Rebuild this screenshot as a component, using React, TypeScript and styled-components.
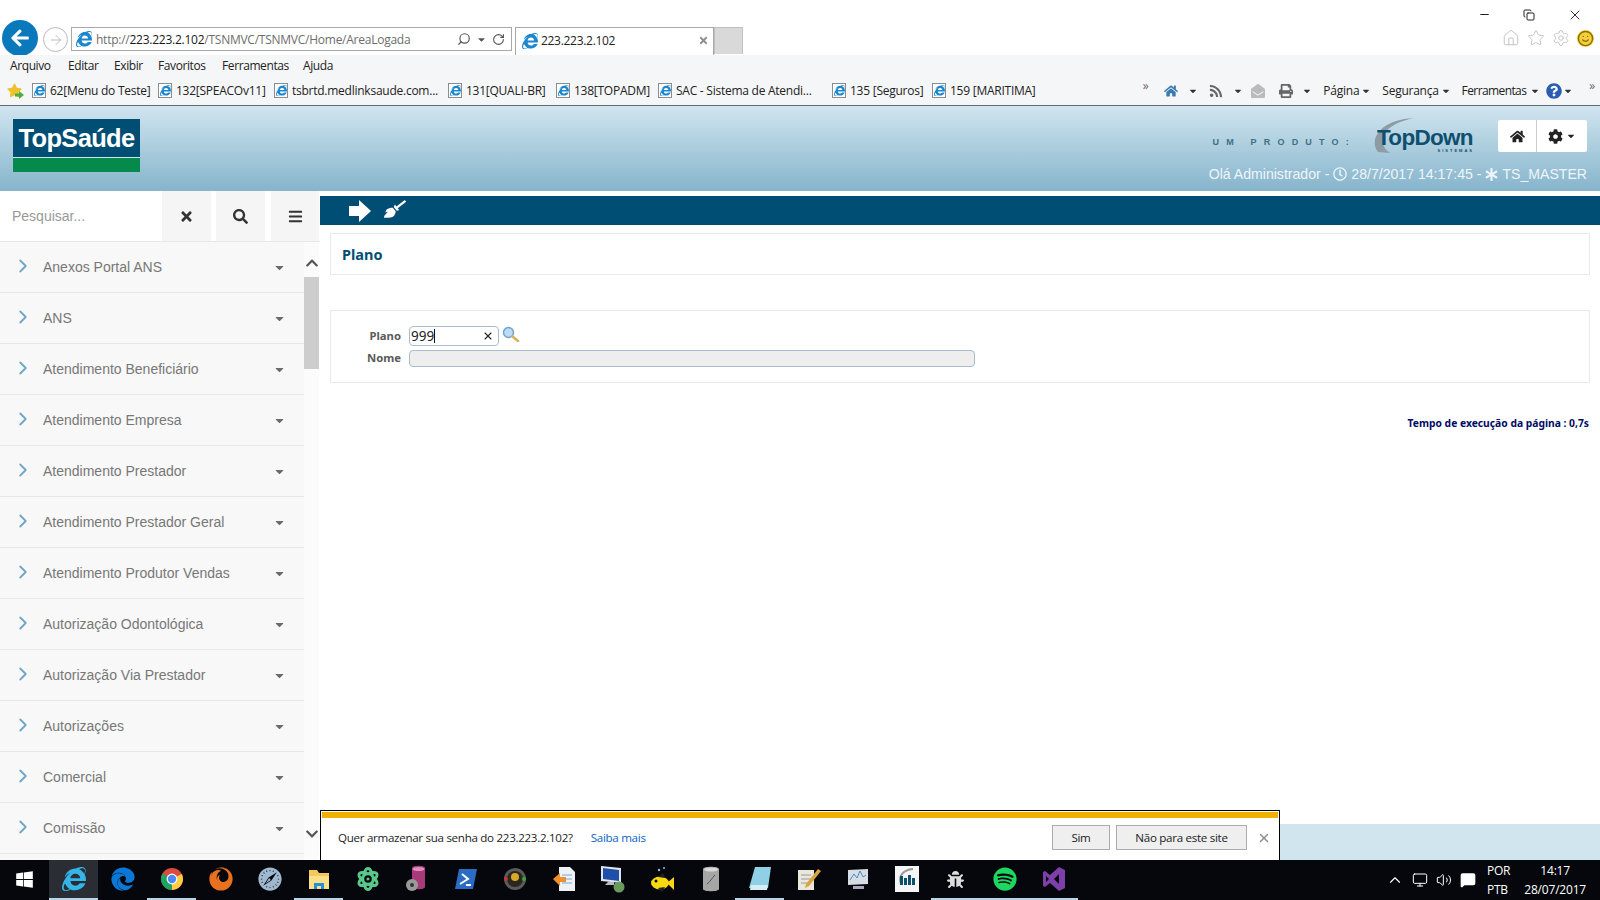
import React from 'react'
import styled, { createGlobalStyle } from 'styled-components'
import {
  FaTimes, FaSearch, FaBars, FaHome, FaCog, FaCaretDown, FaBroom, FaRegClock, FaAsterisk,
  FaInternetExplorer, FaEdge, FaFirefox, FaSafari, FaSpotify, FaWindows, FaAtom, FaChevronUp, FaChevronDown,
  FaStar, FaQuestionCircle, FaRss, FaPrint, FaEnvelopeOpen, FaArrowLeft, FaBug
} from 'react-icons/fa'
import {
  Minus, Copy, X, Home, Star, Settings, Smile, ChevronRight, ChevronUp, Volume2, Monitor, MessageSquare,
  ArrowRight, Search, RotateCw
} from 'lucide-react'

const GlobalStyle = createGlobalStyle`
  html, body { margin: 0; padding: 0; height: 100%; overflow: hidden; background: #fff; }
  * { box-sizing: border-box; }
`

const SEGOE = `"Open Sans", "Noto Sans", sans-serif`
const ARIAL = `"Liberation Sans", Arial, sans-serif`

const Page = styled.div`
  width: 1600px;
  height: 900px;
  display: flex;
  flex-direction: column;
  overflow: hidden;
  font-family: ${ARIAL};
`

/* ---- browser chrome ---- */
const TitleRow = styled.div`
  height: 55px;
  display: flex;
  justify-content: space-between;
  background: #fff;
  overflow: hidden;
`
const NavGroup = styled.div`
  display: flex;
  align-items: flex-start;
`
const BackButton = styled.div`
  width: 36px;
  height: 36px;
  margin: 20px 0 0 2px;
  border-radius: 50%;
  background: #0a79bb;
  color: #fff;
  display: flex;
  align-items: center;
  justify-content: center;
  font-size: 20px;
`
const ForwardButton = styled.div`
  width: 25px;
  height: 25px;
  margin: 27px 0 0 5px;
  border: 1px solid #bbb;
  border-radius: 50%;
  color: #bdbdbd;
  display: flex;
  align-items: center;
  justify-content: center;
`
const AddressBar = styled.div`
  width: 441px;
  height: 24px;
  margin: 27px 0 0 3px;
  border: 1px solid #a8a8a8;
  display: flex;
  align-items: center;
  padding: 0 6px 0 4px;
  font: 12px ${SEGOE};
  letter-spacing: -0.25px;
  color: #6d6d6d;
`
const UrlHost = styled.span`
  color: #1a1a1a;
`
const Url = styled.div`
  margin-left: 4px;
  flex: 1;
  white-space: nowrap;
`
const AddressTools = styled.div`
  display: flex;
  align-items: center;
  gap: 5px;
  color: #555;
  font-size: 11px;
`
const MirrorIcon = styled.span`
  display: flex;
  transform: scaleX(-1);
`
const Tab = styled.div`
  width: 199px;
  height: 28px;
  margin: 27px 0 0 3px;
  border: 1px solid #a8a8a8;
  border-bottom: 0;
  display: flex;
  align-items: center;
  padding: 0 4px 2px 6px;
  font: 12px ${SEGOE};
  letter-spacing: -0.3px;
  color: #222;
`
const TabTitle = styled.span`
  margin-left: 3px;
  flex: 1;
`
const TabClose = styled.span`
  color: #8f8f8f;
  font-size: 11px;
  display: flex;
`
const NewTab = styled.div`
  width: 29px;
  height: 27px;
  margin-top: 27px;
  background: #d9d9d9;
  border: 1px solid #c0c0c0;
  border-bottom: 0;
`
const RightTools = styled.div`
  display: flex;
  flex-direction: column;
  align-items: flex-end;
  padding-right: 6px;
`
const WindowControls = styled.div`
  display: flex;
  gap: 32px;
  height: 29px;
  align-items: center;
  padding-right: 11px;
  color: #222;
`
const FrameTools = styled.div`
  display: flex;
  gap: 7px;
  align-items: center;
  color: #c2c2c2;
`
const Smiley = styled.span`
  display: flex;
  color: #8a7000;
  background: #f5cf3d;
  border-radius: 50%;
`
const MenuRow = styled.div`
  height: 23px;
  background: #f5f6f7;
  display: flex;
  align-items: center;
  padding: 0 0 2px 10px;
  font: 12px ${SEGOE};
  letter-spacing: -0.4px;
  color: #222;
`
const MenuItem = styled.span<{ $w: number }>`
  width: ${p => p.$w}px;
`
const FavRow = styled.div`
  height: 28px;
  background: #f5f6f7;
  border-bottom: 1px solid #5f6b70;
  display: flex;
  align-items: center;
  justify-content: space-between;
  padding: 0 5px 2px 7px;
  font: 12px ${SEGOE};
  letter-spacing: -0.25px;
  color: #222;
`
const FavList = styled.div`
  display: flex;
  align-items: center;
`
const FavStar = styled.span`
  position: relative;
  display: flex;
  color: #eec12d;
  font-size: 15px;
  margin-right: 10px;
`
const FavArrow = styled.svg`
  position: absolute;
  right: -2px;
  bottom: -1px;
`
const FavItem = styled.span<{ $w: number }>`
  width: ${p => p.$w}px;
  display: flex;
  align-items: center;
  gap: 4px;
  white-space: nowrap;
  overflow: hidden;
`
const CommandBar = styled.div`
  display: flex;
  align-items: center;
`
const CmdIcon = styled.span<{ $c: string; $ml: number }>`
  display: flex;
  color: ${p => p.$c};
  font-size: 14px;
  margin-left: ${p => p.$ml}px;
`
const CmdCaret = styled.span<{ $ml: number }>`
  display: flex;
  font-size: 10px;
  color: #333;
  margin-left: ${p => p.$ml}px;
`
const CmdLabel = styled.span<{ $ml: number; $tight?: boolean }>`
  margin-left: ${p => p.$ml}px;
  letter-spacing: ${p => (p.$tight ? '-0.6px' : '-0.25px')};
`
const Chevrons = styled.span<{ $ml?: number }>`
  color: #666;
  font-size: 12px;
  position: relative;
  top: -5px;
  margin-left: ${p => p.$ml || 0}px;
`
const PageIconBox = styled.span`
  position: relative;
  width: 14px;
  height: 15px;
  flex: none;
  background: #fff;
  border: 1px solid #8c8c8c;
  display: flex;
  align-items: center;
  justify-content: center;
  color: #1c86cf;
  font-size: 11px;
`

/* ---- app header ---- */
const Header = styled.header`
  height: 85px;
  background: linear-gradient(#d0e5ef, #86b4cc);
  display: flex;
  justify-content: space-between;
  padding: 13px 13px 0 13px;
`
const Logo = styled.div`
  width: 127px;
  height: 53px;
  background: #004e73;
  display: flex;
  flex-direction: column;
`
const LogoName = styled.div`
  height: 38px;
  color: #fff;
  font: bold 25.5px/38px ${ARIAL};
  letter-spacing: -0.7px;
  text-align: center;
`
const LogoBand = styled.div`
  height: 15px;
  background: #068a4b;
  border-top: 1px solid #d0e5ef;
`
const HeaderRight = styled.div`
  display: flex;
  flex-direction: column;
  align-items: flex-end;
`
const BrandRow = styled.div`
  display: flex;
  align-items: flex-start;
  margin-top: 1px;
`
const BrandCaption = styled.span`
  font: bold 9px ${ARIAL};
  letter-spacing: 7.2px;
  color: #3f7186;
  margin-right: 14px;
  margin-top: 17px;
`
const TopDownMark = styled.div`
  position: relative;
  width: 106px;
  height: 34px;
  margin-right: 22px;
`
const Swoosh = styled.svg`
  position: absolute;
  left: 0;
  top: -3px;
`
const TopDownName = styled.span`
  position: absolute;
  left: 7px;
  top: 6px;
  font: bold 22.5px/24px ${ARIAL};
  letter-spacing: -0.7px;
  color: #0f4f6e;
`
const TopDownSub = styled.span`
  position: absolute;
  right: 2px;
  top: 28px;
  font: bold 4px/5px ${ARIAL};
  letter-spacing: 2px;
  color: #0f4f6e;
`
const BtnGroup = styled.div`
  display: flex;
  height: 32px;
  background: #fff;
  border-radius: 2px;
  color: #222;
`
const HeaderBtn = styled.div<{ $w: number; $line?: boolean }>`
  width: ${p => p.$w}px;
  display: flex;
  align-items: center;
  justify-content: center;
  font-size: 15px;
  gap: 3px;
  border-right: ${p => (p.$line ? '1px solid #ccc' : '0')};
`
const SmallCaret = styled.span`
  display: flex;
  font-size: 10px;
`
const Greeting = styled.div`
  display: flex;
  align-items: center;
  gap: 4px;
  margin-top: 12px;
  font: 14.1px ${ARIAL};
  color: #eef5f8;
  white-space: nowrap;
`

/* ---- body ---- */
const Body = styled.div`
  height: 669px;
  display: flex;
  position: relative;
`
const Sidebar = styled.aside`
  width: 320px;
  flex: none;
  display: flex;
  flex-direction: column;
`
const SearchRow = styled.div`
  height: 51px;
  flex: none;
  display: flex;
  border-bottom: 1px solid #e7e7e7;
`
const SearchInput = styled.div`
  width: 162px;
  padding-left: 12px;
  font: 14px/51px ${ARIAL};
  color: #999;
`
const SearchBtn = styled.div<{ $ml: number; $w: number }>`
  width: ${p => p.$w}px;
  margin-left: ${p => p.$ml}px;
  background: #f5f5f5;
  display: flex;
  align-items: center;
  justify-content: center;
  color: #333;
  font-size: 15px;
`
const SideBody = styled.div`
  flex: 1;
  min-height: 0;
  display: flex;
`
const MenuList = styled.ul`
  list-style: none;
  margin: 0;
  padding: 0;
  width: 304px;
  overflow: hidden;
  background: #f8f8f8;
`
const MenuEntry = styled.li`
  height: 51px;
  border-bottom: 1px solid #e7e7e7;
  display: flex;
  align-items: center;
  padding: 0 18px 1px 12px;
  font: 14px ${ARIAL};
  color: #777;
`
const EntryChevron = styled.span`
  display: flex;
  color: #6fa6c4;
  margin: -2px 9px 0 0;
`
const EntryLabel = styled.span`
  flex: 1;
`
const EntryCaret = styled.span`
  display: flex;
  color: #6b6b6b;
  font-size: 13px;
  margin-top: 2px;
`
const ScrollBar = styled.div`
  width: 15px;
  display: flex;
  flex-direction: column;
  align-items: center;
  background: #fbfbfb;
  color: #555;
  font-size: 14px;
`
const ScrollArrow = styled.div<{ $h: number; $pt?: number }>`
  height: ${p => p.$h}px;
  padding-top: ${p => p.$pt || 0}px;
  display: flex;
  align-items: center;
  justify-content: center;
`
const ScrollThumb = styled.div`
  width: 100%;
  height: 92px;
  background: #cdcdcd;
`
const ScrollGap = styled.div`
  flex: 1;
`
const Main = styled.main`
  flex: 1;
  display: flex;
  flex-direction: column;
  padding-top: 5px;
`
const ActionBar = styled.div`
  height: 29px;
  background: #004e73;
  color: #fff;
  display: flex;
  align-items: center;
  gap: 12px;
  padding-left: 28px;
`
const ActionIcon = styled.span<{ $s: number; $mt?: number }>`
  display: flex;
  font-size: ${p => p.$s}px;
  margin-top: ${p => p.$mt || 0}px;
`
const Card = styled.section`
  margin: 8px 10px 0 10px;
  width: 1260px;
  height: 42px;
  border: 1px solid #e9e9e9;
  padding-left: 11px;
  display: flex;
  align-items: center;
`
const Title = styled.h1`
  margin: 0;
  font: bold 14.5px "Noto Sans", sans-serif;
  color: #004e73;
`
const FormCard = styled.section`
  margin: 35px 10px 0 10px;
  width: 1260px;
  height: 73px;
  border: 1px solid #e9e9e9;
  padding-top: 15px;
  display: flex;
  flex-direction: column;
  gap: 4px;
`
const FormRow = styled.div<{ $h: number }>`
  height: ${p => p.$h}px;
  display: flex;
  align-items: center;
`
const FieldLabel = styled.label`
  width: 70px;
  margin-right: 8px;
  padding-bottom: 2px;
  text-align: right;
  font: bold 11.3px "Noto Sans", sans-serif;
  color: #5a5a5a;
`
const CodeInput = styled.div`
  width: 90px;
  height: 20px;
  border: 1px solid #a9bccd;
  border-radius: 4px;
  display: flex;
  align-items: center;
  justify-content: space-between;
  padding: 0 4px 0 1px;
  font: 13.5px "Noto Sans", sans-serif;
  color: #222;
`
const Caret = styled.span`
  display: inline-block;
  width: 1px;
  height: 14px;
  background: #111;
  vertical-align: -2px;
`
const ClearX = styled.span`
  display: flex;
  color: #222;
`
const Lookup = styled.span`
  display: flex;
  margin: -5px 0 0 3px;
`
const NameInput = styled.div`
  width: 566px;
  height: 17px;
  border: 1px solid #a9bccd;
  border-radius: 4px;
  background: #eeeeee;
`
const ExecTime = styled.div`
  margin: 33px 11px 0 0;
  text-align: right;
  font: bold 10.3px "Noto Sans", sans-serif;
  color: #000b66;
`
const FooterBand = styled.div`
  margin-top: auto;
  height: 36px;
  background: #d0e5ed;
`
const SavePrompt = styled.div`
  position: absolute;
  left: 320px;
  bottom: 0;
  width: 960px;
  height: 50px;
  background: #fff;
  border: 1px solid #000;
  border-bottom: 0;
  padding-top: 1px;
  font: 11.6px ${SEGOE};
  letter-spacing: -0.3px;
  color: #222;
`
const PromptBar = styled.div`
  height: 6px;
  margin: 0 1px;
  background: #f0b000;
`
const PromptBody = styled.div`
  height: 41px;
  display: flex;
  align-items: center;
  padding: 0 0 2px 17px;
`
const PromptLink = styled.a`
  margin-left: 18px;
  color: #0a63c4;
  flex: 1;
`
const PromptButton = styled.button<{ $w: number }>`
  width: ${p => p.$w}px;
  height: 25px;
  margin-right: 6px;
  padding: 0;
  background: #efefef;
  border: 1px solid #acacac;
  font: inherit;
  letter-spacing: inherit;
  color: inherit;
`
const PromptClose = styled.span`
  display: flex;
  margin: 0 8px 0 4px;
  color: #8a8a8a;
`

/* ---- taskbar ---- */
const Taskbar = styled.footer`
  height: 40px;
  background: #05070c;
  display: flex;
  align-items: stretch;
  color: #fff;
  font: 12px ${SEGOE};
  letter-spacing: -0.2px;
`
const TaskSlot = styled.div<{ $active?: boolean; $open?: boolean; $c?: string; $s?: number }>`
  width: 49px;
  display: flex;
  align-items: center;
  justify-content: center;
  position: relative;
  font-size: ${p => p.$s || 24}px;
  color: ${p => p.$c || '#fff'};
  background: ${p => (p.$active ? '#2a2d33' : 'transparent')};
  border-bottom: 2px solid ${p => (p.$open || p.$active ? '#b6d6ea' : 'transparent')};
`
const Tray = styled.div`
  margin-left: auto;
  display: flex;
  align-items: center;
  padding-right: 14px;
  gap: 8px;
`
const TrayStack = styled.div<{ $center?: boolean; $ml?: number }>`
  display: flex;
  flex-direction: column;
  gap: 2px;
  line-height: 17px;
  text-align: ${p => (p.$center ? 'center' : 'left')};
  margin-left: ${p => p.$ml || 0}px;
`

const IePage = () => (
  <PageIconBox>
    <FaInternetExplorer />
  </PageIconBox>
)

const ChromeIcon = () => (
  <svg width="24" height="24" viewBox="0 0 24 24">
    <circle cx="12" cy="12" r="11" fill="#dd4b3e" />
    <path d="M12 12 L2.5 6.5 A11 11 0 0 0 12 23 Z" fill="#1da462" />
    <path d="M12 12 L21.8 7 A11 11 0 0 1 12 23 Z" fill="#ffcd40" />
    <circle cx="12" cy="12" r="5.4" fill="#fff" />
    <circle cx="12" cy="12" r="4.2" fill="#4c8bf5" />
  </svg>
)
const FolderIcon = () => (
  <svg width="24" height="24" viewBox="0 0 24 24">
    <path d="M2 3h8l2 3h10v16H2z" fill="#f4c95b" />
    <path d="M2 9h20v13H2z" fill="#fbe08a" />
    <path d="M7 16h10v6H7z" fill="#2a8fd6" />
    <path d="M10 19h4v3h-4z" fill="#fbe08a" />
  </svg>
)
const DbIcon = () => (
  <svg width="24" height="28" viewBox="0 0 24 28">
    <path d="M7 3c0-3 13-3 13 0v19c0 3-13 3-13 0z" fill="#a83a7a" />
    <ellipse cx="13.5" cy="4" rx="6" ry="2" fill="#dd8fc0" />
    <circle cx="7" cy="20" r="6" fill="#9a9a9a" />
    <circle cx="7" cy="20" r="2" fill="#333" />
  </svg>
)
const PsIcon = () => (
  <svg width="24" height="24" viewBox="0 0 24 24">
    <path d="M5 2h18l-4 20H1z" fill="#2a6cc4" />
    <path d="M8 7l6 5-8 5" fill="none" stroke="#fff" strokeWidth="2" />
    <path d="M12 18h5" stroke="#fff" strokeWidth="2" />
  </svg>
)
const DiscIcon = () => (
  <svg width="24" height="24" viewBox="0 0 24 24">
    <circle cx="12" cy="12" r="11" fill="#5b5b5b" />
    <circle cx="12" cy="12" r="8" fill="#2a2620" />
    <circle cx="12" cy="10" r="4" fill="#d6a928" />
    <circle cx="3" cy="12" r="2" fill="#c33" />
    <circle cx="21" cy="12" r="2" fill="#3a3" />
  </svg>
)
const DocArrowIcon = () => (
  <svg width="24" height="26" viewBox="0 0 24 26">
    <path d="M7 1h11l5 5v19H7z" fill="#eef1f5" />
    <path d="M10 9h10M10 13h10M10 17h10" stroke="#7ba7d1" />
    <path d="M1 13l7-6v4h6v5H8v4z" fill="#ef8d2f" />
  </svg>
)
const PcIcon = () => (
  <svg width="26" height="28" viewBox="0 0 26 28">
    <path d="M1 1l20 2v15L1 16z" fill="#dfe6ee" />
    <path d="M3 3l16 2v11L3 14z" fill="#214fa8" />
    <path d="M8 17h6v3H5z" fill="#b9bec4" />
    <circle cx="19" cy="22" r="5.5" fill="#6a9a5c" />
  </svg>
)
const FishIcon = () => (
  <svg width="26" height="28" viewBox="0 0 26 28">
    <ellipse cx="11" cy="18" rx="9" ry="6.5" fill="#f7d90f" />
    <path d="M18 18l7-6v13z" fill="#f7d90f" />
    <circle cx="7" cy="16" r="1.5" fill="#111" />
    <path d="M9 23l4 4 3-5zM9 12l5-4 2 5z" fill="#222" />
    <circle cx="10" cy="5" r="1.2" fill="#9bd" />
    <circle cx="15" cy="3" r="1" fill="#9bd" />
  </svg>
)
const DiskIcon = () => (
  <svg width="20" height="26" viewBox="0 0 20 26">
    <path d="M2 3c0-3 16-3 16 0v20c0 3-16 3-16 0z" fill="#a6a6a6" />
    <ellipse cx="10" cy="3.5" rx="7" ry="2" fill="#d8d8d8" />
    <path d="M6 18c3-2 5-6 8-9" stroke="#555" fill="none" />
  </svg>
)
const NoteIcon = () => (
  <svg width="24" height="26" viewBox="0 0 24 26">
    <path d="M7 1h16l-3 21H1z" fill="#8fd0e6" />
    <path d="M3 19h17l-1 5H2z" fill="#d4eef6" />
  </svg>
)
const NotepadIcon = () => (
  <svg width="26" height="26" viewBox="0 0 26 26">
    <path d="M2 4h16v20H2z" fill="#eae7dc" />
    <path d="M5 9h10M5 13h10M5 17h10" stroke="#999" />
    <path d="M10 18L22 3l3 2-12 15-4 2z" fill="#d9a441" />
  </svg>
)
const MonitorIcon = () => (
  <svg width="26" height="26" viewBox="0 0 26 26">
    <path d="M3 4l20-1v15l-20 1z" fill="#d6dde3" />
    <path d="M5 14l4-6 3 4 3-7 3 6 3-2" stroke="#4a8bc9" fill="none" />
    <path d="M8 20h11v3H8z" fill="#aab" />
  </svg>
)
const TopDownTile = () => (
  <svg width="24" height="26" viewBox="0 0 24 26">
    <path d="M0 0h24v26H0z" fill="#f5f5f5" />
    <path d="M6 18c-3-8 2-14 12-15" fill="none" stroke="#999" strokeWidth="2" />
    <path d="M5 10h3v9H5zM9 12h3v7H9zM13 9h3v10h-3zM17 12h3v7h-3z" fill="#0f4f6e" />
  </svg>
)
const VsIcon = () => (
  <svg width="24" height="26" viewBox="0 0 24 26">
    <path d="M17 1l6 3v18l-6 3-9-8-5 4-2-1V6l2-1 5 4z" fill="#7d3fa8" />
    <path d="M17 8l-5 5 5 5zM4 10v6l3-3z" fill="#05070c" />
  </svg>
)

const MENU = [
  'Anexos Portal ANS', 'ANS', 'Atendimento Beneficiário', 'Atendimento Empresa', 'Atendimento Prestador',
  'Atendimento Prestador Geral', 'Atendimento Produtor Vendas', 'Autorização Odontológica',
  'Autorização Via Prestador', 'Autorizações', 'Comercial', 'Comissão', ''
]

const FAVS: [string, number][] = [
  ['62[Menu do Teste]', 126],
  ['132[SPEACOv11]', 116],
  ['tsbrtd.medlinksaude.com...', 174],
  ['131[QUALI-BR]', 108],
  ['138[TOPADM]', 102],
  ['SAC - Sistema de Atendi...', 174],
  ['135 [Seguros]', 100],
  ['159 [MARITIMA]', 120]
]

const TASKS: { node: React.ReactNode; c?: string; s?: number; active?: boolean; open?: boolean }[] = [
  { node: <FaInternetExplorer />, c: '#35b6e8', active: true },
  { node: <FaEdge />, c: '#0b78d7' },
  { node: <ChromeIcon />, open: true },
  { node: <FaFirefox />, c: '#e8701f' },
  { node: <FaSafari />, c: '#9fb8cf' },
  { node: <FolderIcon />, open: true },
  { node: <FaAtom />, c: '#58c98a' },
  { node: <DbIcon /> },
  { node: <PsIcon /> },
  { node: <DiscIcon /> },
  { node: <DocArrowIcon /> },
  { node: <PcIcon /> },
  { node: <FishIcon /> },
  { node: <DiskIcon /> },
  { node: <NoteIcon />, open: true },
  { node: <NotepadIcon /> },
  { node: <MonitorIcon /> },
  { node: <TopDownTile /> },
  { node: <FaBug />, c: '#ddd', s: 17, open: true },
  { node: <FaSpotify />, c: '#1ed760', open: true },
  { node: <VsIcon />, open: true }
]

const App = () => (
  <Page>
    <GlobalStyle />
    <TitleRow>
      <NavGroup>
        <BackButton><FaArrowLeft /></BackButton>
        <ForwardButton><ArrowRight size={16} strokeWidth={1.5} /></ForwardButton>
        <AddressBar>
          <FaInternetExplorer color="#1c86cf" size={16} />
          <Url>http://<UrlHost>223.223.2.102</UrlHost>/TSNMVC/TSNMVC/Home/AreaLogada</Url>
          <AddressTools>
            <MirrorIcon><Search size={14} strokeWidth={2} /></MirrorIcon>
            <FaCaretDown />
            <RotateCw size={13} strokeWidth={2} />
          </AddressTools>
        </AddressBar>
        <Tab>
          <FaInternetExplorer color="#1c86cf" size={16} />
          <TabTitle>223.223.2.102</TabTitle>
          <TabClose><FaTimes /></TabClose>
        </Tab>
        <NewTab />
      </NavGroup>
      <RightTools>
        <WindowControls>
          <Minus size={13} />
          <Copy size={12} />
          <X size={16} strokeWidth={1.4} />
        </WindowControls>
        <FrameTools>
          <Home size={18} strokeWidth={1.3} />
          <Star size={18} strokeWidth={1.3} />
          <Settings size={18} strokeWidth={1.3} />
          <Smiley><Smile size={17} /></Smiley>
        </FrameTools>
      </RightTools>
    </TitleRow>

    <MenuRow>
      <MenuItem $w={58}>Arquivo</MenuItem>
      <MenuItem $w={46}>Editar</MenuItem>
      <MenuItem $w={44}>Exibir</MenuItem>
      <MenuItem $w={64}>Favoritos</MenuItem>
      <MenuItem $w={81}>Ferramentas</MenuItem>
      <MenuItem $w={40}>Ajuda</MenuItem>
    </MenuRow>

    <FavRow>
      <FavList>
        <FavStar>
          <FaStar />
          <FavArrow width="9" height="8" viewBox="0 0 9 8">
            <path d="M0 2.5h4V0l5 4-5 4V5.500H0z" fill="#4caf3a" />
          </FavArrow>
        </FavStar>
        {FAVS.map(([label, w]) => (
          <FavItem key={label} $w={w}>
            <IePage />
            {label}
          </FavItem>
        ))}
      </FavList>
      <CommandBar>
        <Chevrons>»</Chevrons>
        <CmdIcon $c="#3b7bb5" $ml={16}><FaHome /></CmdIcon>
        <CmdCaret $ml={10}><FaCaretDown /></CmdCaret>
        <CmdIcon $c="#666" $ml={11}><FaRss /></CmdIcon>
        <CmdCaret $ml={10}><FaCaretDown /></CmdCaret>
        <CmdIcon $c="#bbb" $ml={8}><FaEnvelopeOpen /></CmdIcon>
        <CmdIcon $c="#666" $ml={14}><FaPrint /></CmdIcon>
        <CmdCaret $ml={9}><FaCaretDown /></CmdCaret>
        <CmdLabel $ml={11}>Página</CmdLabel>
        <CmdCaret $ml={2}><FaCaretDown /></CmdCaret>
        <CmdLabel $ml={11}>Segurança</CmdLabel>
        <CmdCaret $ml={2}><FaCaretDown /></CmdCaret>
        <CmdLabel $ml={11} $tight>Ferramentas</CmdLabel>
        <CmdCaret $ml={4}><FaCaretDown /></CmdCaret>
        <CmdIcon $c="#2a5db0" $ml={6}><FaQuestionCircle size={16} /></CmdIcon>
        <CmdCaret $ml={1}><FaCaretDown /></CmdCaret>
        <Chevrons $ml={16}>»</Chevrons>
      </CommandBar>
    </FavRow>

    <Header>
      <Logo>
        <LogoName>TopSaúde</LogoName>
        <LogoBand />
      </Logo>
      <HeaderRight>
        <BrandRow>
          <BrandCaption>UM PRODUTO:</BrandCaption>
          <TopDownMark>
            <Swoosh width="60" height="36" viewBox="0 0 60 36">
              <path d="M8 35C-1 24 8 3 44 1C24 5 12 14 13 24C13 29 15 33 20 36Z" fill="#8d9ba3" />
            </Swoosh>
            <TopDownName>TopDown</TopDownName>
            <TopDownSub>SISTEMAS</TopDownSub>
          </TopDownMark>
          <BtnGroup>
            <HeaderBtn $w={39} $line><FaHome /></HeaderBtn>
            <HeaderBtn $w={50}><FaCog /><SmallCaret><FaCaretDown /></SmallCaret></HeaderBtn>
          </BtnGroup>
        </BrandRow>
        <Greeting>
          Olá Administrador - <FaRegClock size={14} /> 28/7/2017 14:17:45 - <FaAsterisk size={13} /> TS_MASTER
        </Greeting>
      </HeaderRight>
    </Header>

    <Body>
      <Sidebar>
        <SearchRow>
          <SearchInput>Pesquisar...</SearchInput>
          <SearchBtn $ml={0} $w={49}><FaTimes /></SearchBtn>
          <SearchBtn $ml={5} $w={49}><FaSearch /></SearchBtn>
          <SearchBtn $ml={6} $w={48}><FaBars /></SearchBtn>
        </SearchRow>
        <SideBody>
          <MenuList>
            {MENU.map((label, i) => (
              <MenuEntry key={i}>
                {label && <EntryChevron><ChevronRight size={22} strokeWidth={2} /></EntryChevron>}
                <EntryLabel>{label}</EntryLabel>
                {label && <EntryCaret><FaCaretDown /></EntryCaret>}
              </MenuEntry>
            ))}
          </MenuList>
          <ScrollBar>
            <ScrollArrow $h={35} $pt={7}><FaChevronUp /></ScrollArrow>
            <ScrollThumb />
            <ScrollGap />
            <ScrollArrow $h={52}><FaChevronDown /></ScrollArrow>
          </ScrollBar>
        </SideBody>
      </Sidebar>

      <Main>
        <ActionBar>
          <ActionIcon $s={22}>
            <svg width="24" height="24" viewBox="0 0 24 24" fill="#fff">
              <path d="M1 7h10V1l12 11-12 11v-6H1z" />
            </svg>
          </ActionIcon>
          <ActionIcon $s={22} $mt={-3}><FaBroom /></ActionIcon>
        </ActionBar>
        <Card><Title>Plano</Title></Card>
        <FormCard>
          <FormRow $h={20}>
            <FieldLabel>Plano</FieldLabel>
            <CodeInput>
              <span>999<Caret /></span>
              <ClearX><X size={12} strokeWidth={2.2} /></ClearX>
            </CodeInput>
            <Lookup>
              <svg width="18" height="16" viewBox="0 0 18 16">
                <circle cx="6.5" cy="6.5" r="5" fill="#bcdcf5" stroke="#6d9fcf" strokeWidth="1.4" />
                <path d="M10.500 10.500L16 15" stroke="#d9b05e" strokeWidth="2.6" strokeLinecap="round" />
              </svg>
            </Lookup>
          </FormRow>
          <FormRow $h={17}>
            <FieldLabel>Nome</FieldLabel>
            <NameInput />
          </FormRow>
        </FormCard>
        <ExecTime>Tempo de execução da página : 0,7s</ExecTime>
        <FooterBand />
      </Main>

      <SavePrompt>
        <PromptBar />
        <PromptBody>
          Quer armazenar sua senha do 223.223.2.102?
          <PromptLink>Saiba mais</PromptLink>
          <PromptButton $w={58}>Sim</PromptButton>
          <PromptButton $w={131}>Não para este site</PromptButton>
          <PromptClose><X size={14} strokeWidth={2.4} /></PromptClose>
        </PromptBody>
      </SavePrompt>
    </Body>

    <Taskbar>
      <TaskSlot><FaWindows size={19} /></TaskSlot>
      {TASKS.map((t, i) => (
        <TaskSlot key={i} $c={t.c} $s={t.s} $active={t.active} $open={t.open}>{t.node}</TaskSlot>
      ))}
      <Tray>
        <ChevronUp size={18} strokeWidth={1.5} />
        <Monitor size={16} strokeWidth={1.5} />
        <Volume2 size={16} strokeWidth={1.5} />
        <MessageSquare size={16} fill="#fff" />
        <TrayStack $ml={3}><span>POR</span><span>PTB</span></TrayStack>
        <TrayStack $center $ml={6}><span>14:17</span><span>28/07/2017</span></TrayStack>
      </Tray>
    </Taskbar>
  </Page>
)

export default App
